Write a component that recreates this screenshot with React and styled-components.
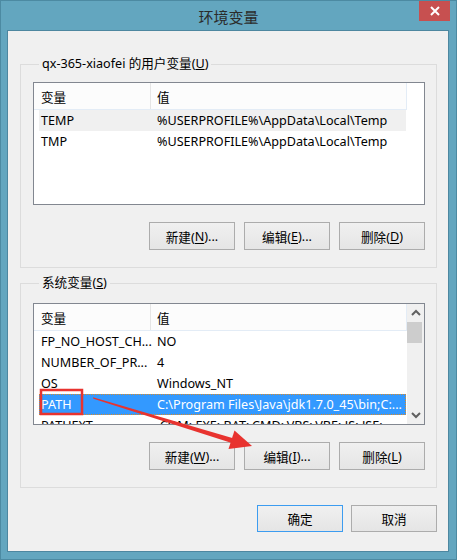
import React from "react";
import styled, { createGlobalStyle } from "styled-components";

const GlobalStyle = createGlobalStyle`
  html, body {
    margin: 0;
    padding: 0;
    background: #ffffff;
  }
  body {
    font-family: "Noto Sans", "Noto Sans CJK SC", sans-serif;
    font-size: 12.6px;
    color: #000;
  }
`;

const Frame = styled.div`
  position: relative;
  width: 457px;
  height: 560px;
  box-sizing: border-box;
  background: #63a6bf;
  border: 1px solid #4c8aa2;
  padding: 29px 7px 7px 6px;
  display: flex;
  flex-direction: column;
`;

const TitleBar = styled.div`
  position: absolute;
  left: 0;
  right: 0;
  top: 0;
  height: 30px;
  display: flex;
  align-items: center;
  justify-content: center;
  font-family: "Noto Sans CJK SC", sans-serif;
  font-size: 15px;
  color: #2b2b2b;
`;

const CloseButton = styled.div`
  position: absolute;
  top: 0;
  right: 6px;
  width: 31px;
  height: 20px;
  background: #c75050;
  display: flex;
  align-items: center;
  justify-content: center;
`;

const Client = styled.div`
  flex: 1;
  background: #f0f0f0;
  border: 1px solid #4d87a0;
  padding: 24px 11px 0 12px;
  display: flex;
  flex-direction: column;
`;

const Group = styled.fieldset`
  margin: ${(p) => (p.$first ? "0" : "6px")} 0 0 0;
  border: 1px solid #dcdcdc;
  padding: ${(p) => p.$padTop}px 11px 17px 12px;
  min-width: 0;
  display: flex;
  flex-direction: column;
`;

const Legend = styled.legend`
  margin-left: 6px;
  padding: 0 3px;
  line-height: 18px;
  height: 18px;
  color: #000;
`;

const ListBox = styled.div`
  position: relative;
  height: ${(p) => p.$height}px;
  box-sizing: border-box;
  border: 1px solid #828790;
  background: #fff;
  overflow: hidden;
  display: flex;
`;

const ListMain = styled.div`
  flex: 1;
  min-width: 0;
  display: flex;
  flex-direction: column;
`;

const HeaderRow = styled.div`
  display: flex;
  height: 26px;
  width: 372px;
  border-bottom: 1px solid #e3ecf6;
  border-right: 1px solid #e3ecf6;
  background: #fcfcfc;
  align-items: center;
  flex-shrink: 0;
`;

const HeaderCell = styled.div`
  width: ${(p) => p.$w}px;
  height: 100%;
  box-sizing: border-box;
  padding-left: ${(p) => p.$pad}px;
  display: flex;
  align-items: center;
  border-right: ${(p) => (p.$divider ? "1px solid #e5e5e5" : "none")};
`;

const Row = styled.div`
  display: flex;
  height: 21px;
  width: 367px;
  margin-left: 5px;
  align-items: center;
  flex-shrink: 0;
  box-sizing: border-box;
  background: ${(p) => (p.$selected ? "#3399ff" : p.$hover ? "#f0f0f0" : "transparent")};
  color: ${(p) => (p.$selected ? "#fff" : "#000")};
  outline: ${(p) => (p.$selected ? "1px dotted #d98b2b" : "none")};
  outline-offset: -1px;
`;

const Cell = styled.div`
  width: ${(p) => p.$w}px;
  padding-left: ${(p) => p.$pad}px;
  box-sizing: border-box;
  white-space: nowrap;
  overflow: hidden;
`;

const ScrollBar = styled.div`
  width: 17px;
  background: #f0f0f0;
  display: flex;
  flex-direction: column;
  align-items: center;
  justify-content: space-between;
  flex-shrink: 0;
`;

const ScrollArrow = styled.div`
  height: 17px;
  width: 17px;
  display: flex;
  align-items: center;
  justify-content: center;
`;

const ScrollTrack = styled.div`
  flex: 1;
  width: 100%;
  padding-top: 1px;
`;

const Thumb = styled.div`
  height: 21px;
  width: 15px;
  background: #cdcdcd;
`;

const ButtonRow = styled.div`
  display: flex;
  justify-content: flex-end;
  gap: ${(p) => p.$gap || 8}px;
  margin-top: ${(p) => p.$top || 17}px;
`;

const Button = styled.div`
  width: 86px;
  height: ${(p) => p.$h || 28}px;
  box-sizing: border-box;
  border: 1px solid ${(p) => (p.$default ? "#3c9cf0" : "#acacac")};
  background: linear-gradient(#f0f0f0, #e5e5e5);
  display: flex;
  align-items: center;
  justify-content: center;
  color: #000;
  u {
    text-decoration-thickness: 1px;
    text-underline-offset: 2px;
  }
`;

const Annotation = styled.svg`
  position: absolute;
  left: -1px;
  top: -1px;
  pointer-events: none;
`;

const Chevron = ({ up }) => (
  <svg width="10" height="7" viewBox="0 0 10 7">
    <path
      d={up ? "M1 6 L5 2 L9 6" : "M1 1 L5 5 L9 1"}
      fill="none"
      stroke="#606060"
      strokeWidth="2"
    />
  </svg>
);

const userVars = [
  { name: "TEMP", value: "%USERPROFILE%\\AppData\\Local\\Temp", hover: true },
  { name: "TMP", value: "%USERPROFILE%\\AppData\\Local\\Temp" },
];

const systemVars = [
  { name: "FP_NO_HOST_CH...", value: "NO" },
  { name: "NUMBER_OF_PR...", value: "4" },
  { name: "OS", value: "Windows_NT" },
  {
    name: "PATH",
    value: "C:\\Program Files\\Java\\jdk1.7.0_45\\bin;C:...",
    selected: true,
  },
  { name: "PATHEXT", value: ".COM;.EXE;.BAT;.CMD;.VBS;.VBE;.JS;.JSE;..." },
];

function VarList({ rows, height, scroll }) {
  return (
    <ListBox $height={height}>
      <ListMain>
        <HeaderRow>
          <HeaderCell $w={117} $pad={7} $divider>
            变量
          </HeaderCell>
          <HeaderCell $w={254} $pad={6}>
            值
          </HeaderCell>
        </HeaderRow>
        {rows.map((r) => (
          <Row key={r.name} $selected={r.selected} $hover={r.hover}>
            <Cell $w={117} $pad={2}>
              {r.name}
            </Cell>
            <Cell $w={250} $pad={1}>
              {r.value}
            </Cell>
          </Row>
        ))}
      </ListMain>
      {scroll && (
        <ScrollBar>
          <ScrollArrow>
            <Chevron up />
          </ScrollArrow>
          <ScrollTrack>
            <Thumb />
          </ScrollTrack>
          <ScrollArrow>
            <Chevron />
          </ScrollArrow>
        </ScrollBar>
      )}
    </ListBox>
  );
}

export default function App() {
  return (
    <>
      <GlobalStyle />
      <Frame>
        <TitleBar>
          环境变量
          <CloseButton>
            <svg width="10" height="10" viewBox="0 0 10 10">
              <path d="M1 1 L9 9 M9 1 L1 9" stroke="#fff" strokeWidth="2" />
            </svg>
          </CloseButton>
        </TitleBar>
        <Client>
          <Group $first $padTop={9}>
            <Legend>
              qx-365-xiaofei 的用户变量(<u>U</u>)
            </Legend>
            <VarList rows={userVars} height={123} />
            <ButtonRow $gap={9}>
              <Button>
                新建(<u>N</u>)...
              </Button>
              <Button>
                编辑(<u>E</u>)...
              </Button>
              <Button>
                删除(<u>D</u>)
              </Button>
            </ButtonRow>
          </Group>
          <Group $padTop={11}>
            <Legend>
              系统变量(<u>S</u>)
            </Legend>
            <VarList rows={systemVars} height={122} scroll />
            <ButtonRow $gap={9}>
              <Button>
                新建(<u>W</u>)...
              </Button>
              <Button>
                编辑(<u>I</u>)...
              </Button>
              <Button>
                删除(<u>L</u>)
              </Button>
            </ButtonRow>
          </Group>
          <ButtonRow $top={17}>
            <Button $default $h={27}>
              确定
            </Button>
            <Button $h={27}>取消</Button>
          </ButtonRow>
        </Client>
        <Annotation width="457" height="560" viewBox="0 0 457 560">
          <rect
            x="41"
            y="390"
            width="41"
            height="24"
            fill="none"
            stroke="#e8332f"
            strokeWidth="2.5"
          />
          <polygon
            points="93,397.3 93.4,398.7 232.5,443.3 234,438.5"
            fill="#e8332f"
          />
          <polygon points="252,446 234.5,430.5 228.5,449" fill="#e8332f" />
        </Annotation>
      </Frame>
    </>
  );
}
